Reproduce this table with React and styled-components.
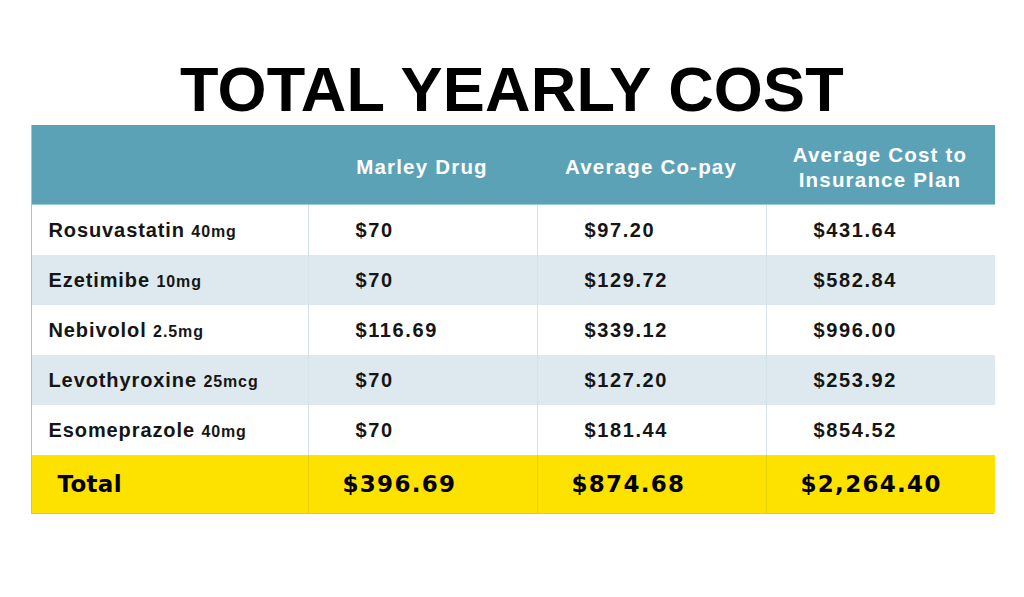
import React from 'react';
import styled, { createGlobalStyle } from 'styled-components';

const GlobalStyle = createGlobalStyle`
  body {
    margin: 0;
    background: #fff;
    font-family: "Liberation Sans", Arial, sans-serif;
    color: #111;
  }
`;

const Page = styled.div`
  width: 1024px;
  height: 597px;
  display: flex;
  flex-direction: column;
  align-items: center;
  padding-top: 58px;
  box-sizing: border-box;
`;

const Title = styled.h1`
  margin: 0 0 5px;
  font-size: 63px;
  line-height: 62px;
  font-weight: 700;
  color: #000;
  letter-spacing: 0.2px;
`;

const Table = styled.div`
  width: 963px;
  display: grid;
  grid-template-columns: 276px 229px 229px 229px;
  border: 1px solid #a9c3cc;
  border-top: none;
  box-sizing: border-box;
`;

const HeadCell = styled.div`
  height: 80px;
  background: #5ba2b7;
  color: #fff;
  display: flex;
  align-items: center;
  justify-content: center;
  text-align: center;
  font-size: 20.5px;
  line-height: 25px;
  font-weight: 700;
  letter-spacing: 1.2px;
  border-bottom: 1px solid #9ccbd8;
  padding-top: 4px;
  box-sizing: border-box;
`;

const Cell = styled.div`
  height: 50px;
  display: flex;
  align-items: center;
  box-sizing: border-box;
  padding-left: ${p => (p.$first ? '17px' : '47px')};
  background: ${p => (p.$alt ? '#dde9ee' : '#fff')};
  border-left: ${p => (p.$first ? 'none' : '1px solid #d6e3e8')};
  font-size: 20px;
  font-weight: 700;
  letter-spacing: ${p => (p.$first ? '0.9px' : '1.6px')};
  color: #151515;
  white-space: nowrap;
`;

const Dose = styled.span`
  font-size: 16px;
  letter-spacing: 0.9px;
`;

const TotalCell = styled.div`
  height: 58px;
  display: flex;
  align-items: center;
  box-sizing: border-box;
  padding-left: ${p => (p.$first ? '26px' : '34px')};
  background: #fde200;
  border-left: ${p => (p.$first ? 'none' : '1px solid #e8d200')};
  font-family: "DejaVu Sans", "Liberation Sans", sans-serif;
  font-size: 23px;
  font-weight: 700;
  letter-spacing: ${p => (p.$first ? '0.3px' : '1.3px')};
  color: #000;
  white-space: nowrap;
`;

const rows = [
  { name: 'Rosuvastatin', dose: '40mg', vals: ['$70', '$97.20', '$431.64'] },
  { name: 'Ezetimibe', dose: '10mg', vals: ['$70', '$129.72', '$582.84'] },
  { name: 'Nebivolol', dose: '2.5mg', vals: ['$116.69', '$339.12', '$996.00'] },
  { name: 'Levothyroxine', dose: '25mcg', vals: ['$70', '$127.20', '$253.92'] },
  { name: 'Esomeprazole', dose: '40mg', vals: ['$70', '$181.44', '$854.52'] },
];

const totals = ['$396.69', '$874.68', '$2,264.40'];

const App = () => {
  return (
    <>
      <GlobalStyle />
      <Page>
        <Title>TOTAL YEARLY COST</Title>
        <Table>
          <HeadCell />
          <HeadCell>Marley Drug</HeadCell>
          <HeadCell>Average Co-pay</HeadCell>
          <HeadCell>Average Cost to<br />Insurance Plan</HeadCell>

          {rows.map((r, i) => (
            <React.Fragment key={r.name}>
              <Cell $first $alt={i % 2 === 1}>
                <span>{r.name} <Dose>{r.dose}</Dose></span>
              </Cell>
              {r.vals.map((v, j) => (
                <Cell key={j} $alt={i % 2 === 1}>{v}</Cell>
              ))}
            </React.Fragment>
          ))}

          <TotalCell $first>Total</TotalCell>
          {totals.map(t => (
            <TotalCell key={t}>{t}</TotalCell>
          ))}
        </Table>
      </Page>
    </>
  );
};

export default App;
